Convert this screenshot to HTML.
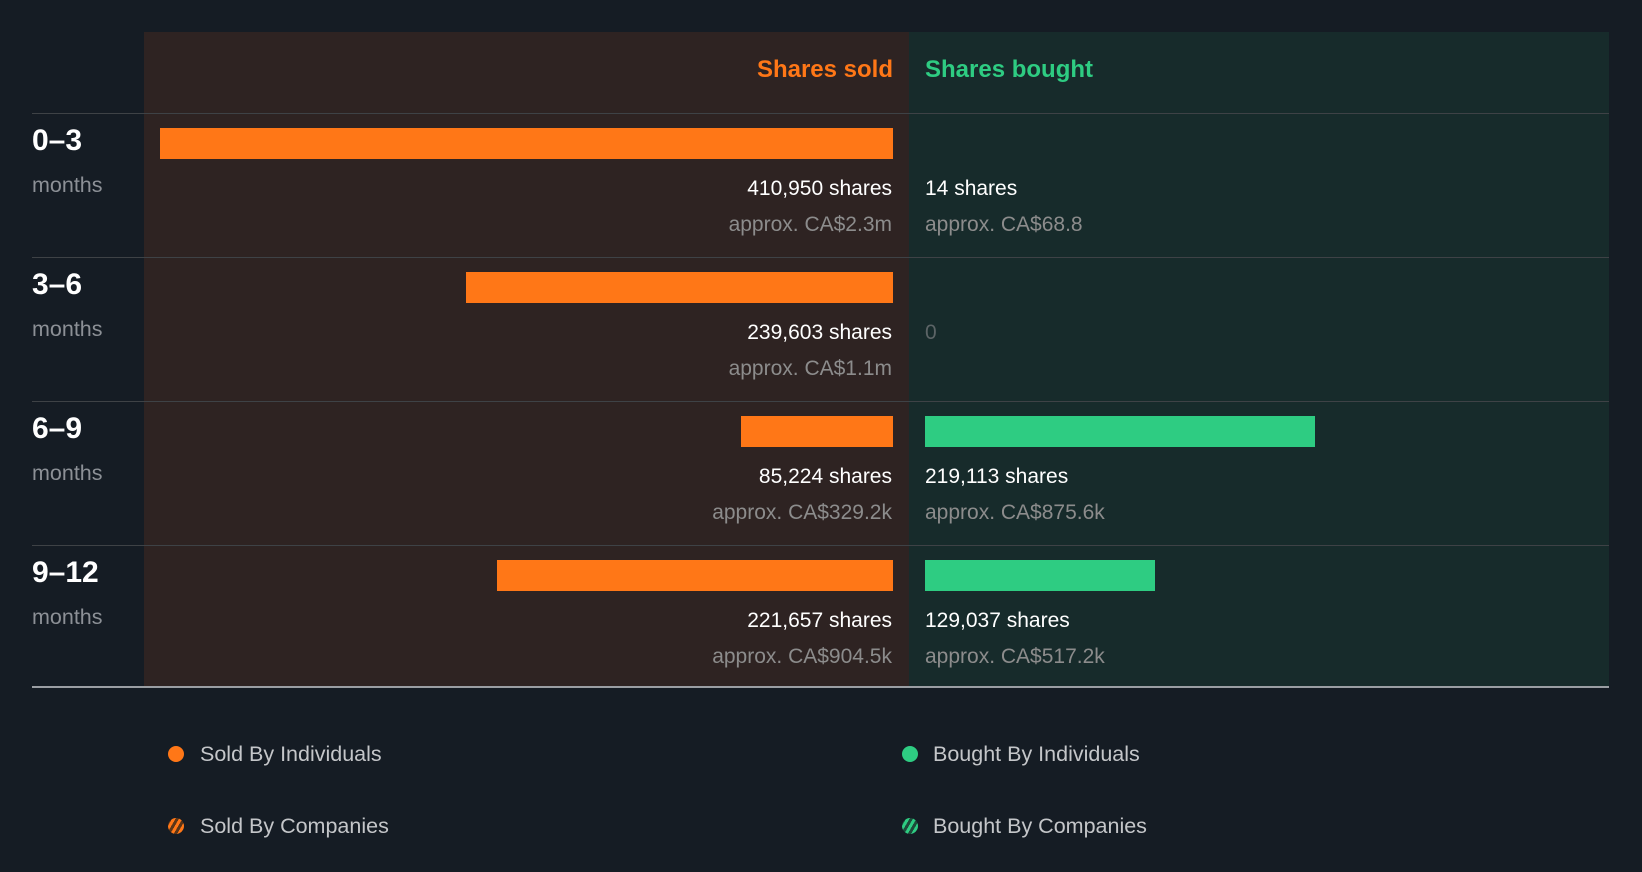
<!DOCTYPE html>
<html><head><style>
body{margin:0;width:1642px;height:872px;background:#151c24;font-family:"Liberation Sans",sans-serif;position:relative;overflow:hidden}
.a{position:absolute}
.sold{background:#2e2322}
.bought{background:#172b2b}
.line{position:absolute;left:32px;width:1577px;height:1px;background:#3e4246}
.lab{position:absolute;left:32px;color:#fff;font-weight:bold;font-size:30px}
.mo{position:absolute;left:32px;color:#8c9096;font-size:21.5px}
.bo{position:absolute;height:31px;background:#ff7717}
.bg{position:absolute;height:31px;background:#2ecc82}
.sh{position:absolute;color:#fff;font-size:21px;white-space:nowrap}
.ap{position:absolute;color:#8c8c8c;font-size:21px;white-space:nowrap}
.r{right:750px;text-align:right}
.l{left:925px}
.dot{position:absolute;width:16px;height:16px;border-radius:50%}
.lg{position:absolute;color:#c4c6c9;font-size:21.5px}
</style></head><body>
<div class="a sold" style="left:144px;top:32px;width:765px;height:655px"></div>
<div class="a bought" style="left:909px;top:32px;width:700px;height:655px"></div>
<div class="a" style="right:749px;top:56px;color:#ff7717;font-weight:bold;font-size:24px">Shares sold</div>
<div class="a" style="left:925px;top:56px;color:#2ecc82;font-weight:bold;font-size:24px">Shares bought</div>
<div class="line" style="top:113px"></div>
<div class="line" style="top:257px"></div>
<div class="line" style="top:401px"></div>
<div class="line" style="top:545px"></div>
<div class="line" style="top:686px;height:2px;background:#9a9ea3"></div>

<div class="lab" style="top:124px">0–3</div><div class="mo" style="top:173px">months</div>
<div class="bo" style="left:160px;width:733px;top:128px"></div>
<div class="sh r" style="top:177px">410,950 shares</div><div class="ap r" style="top:213px">approx. CA$2.3m</div>
<div class="sh l" style="top:177px">14 shares</div><div class="ap l" style="top:213px">approx. CA$68.8</div>

<div class="lab" style="top:268px">3–6</div><div class="mo" style="top:317px">months</div>
<div class="bo" style="left:466px;width:427px;top:272px"></div>
<div class="sh r" style="top:321px">239,603 shares</div><div class="ap r" style="top:357px">approx. CA$1.1m</div>
<div class="ap l" style="top:321px;color:#5c6466">0</div>

<div class="lab" style="top:412px">6–9</div><div class="mo" style="top:461px">months</div>
<div class="bo" style="left:741px;width:152px;top:416px"></div>
<div class="bg" style="left:925px;width:390px;top:416px"></div>
<div class="sh r" style="top:465px">85,224 shares</div><div class="ap r" style="top:501px">approx. CA$329.2k</div>
<div class="sh l" style="top:465px">219,113 shares</div><div class="ap l" style="top:501px">approx. CA$875.6k</div>

<div class="lab" style="top:556px">9–12</div><div class="mo" style="top:605px">months</div>
<div class="bo" style="left:497px;width:396px;top:560px"></div>
<div class="bg" style="left:925px;width:230px;top:560px"></div>
<div class="sh r" style="top:609px">221,657 shares</div><div class="ap r" style="top:645px">approx. CA$904.5k</div>
<div class="sh l" style="top:609px">129,037 shares</div><div class="ap l" style="top:645px">approx. CA$517.2k</div>

<div class="dot" style="left:168px;top:746px;background:#ff7717"></div>
<div class="lg" style="left:200px;top:742px">Sold By Individuals</div>
<div class="dot" style="left:168px;top:818px;background:repeating-linear-gradient(-60deg,#5a3518 0 3px,#ff7717 3px 6px)"></div>
<div class="lg" style="left:200px;top:814px">Sold By Companies</div>
<div class="dot" style="left:902px;top:746px;background:#2ecc82"></div>
<div class="lg" style="left:933px;top:742px">Bought By Individuals</div>
<div class="dot" style="left:902px;top:818px;background:repeating-linear-gradient(-60deg,#1d4a3a 0 3px,#2ecc82 3px 6px)"></div>
<div class="lg" style="left:933px;top:814px">Bought By Companies</div>
</body></html>
